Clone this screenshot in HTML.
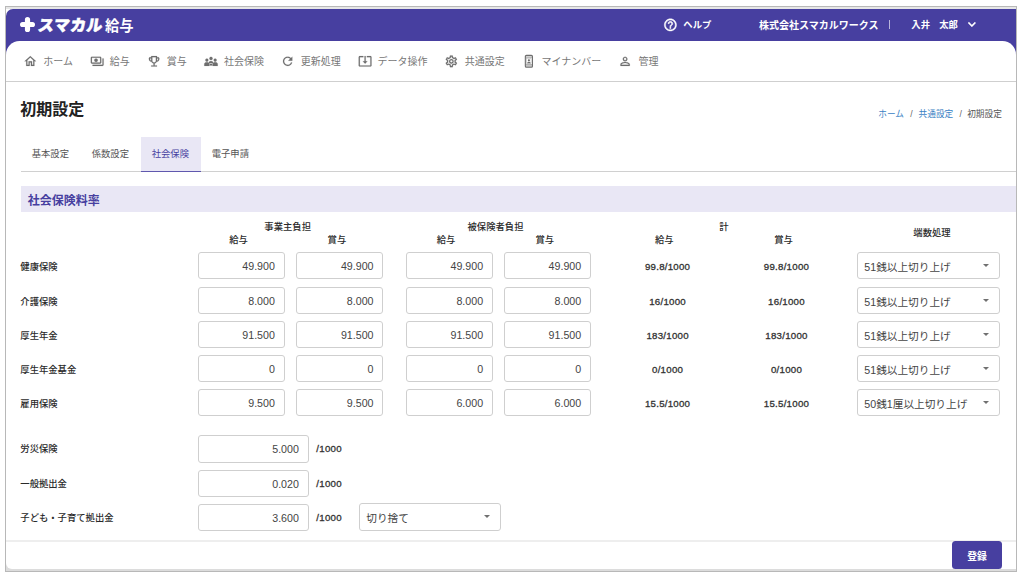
<!DOCTYPE html>
<html>
<head>
<meta charset="utf-8">
<title>初期設定</title>
<style>
*{box-sizing:border-box;margin:0;padding:0}
html,body{width:1024px;height:577px;overflow:hidden;background:#fff}
body{font-family:"Liberation Sans","Noto Sans CJK JP",sans-serif;color:#333;font-size:9.33px;position:relative}
a{color:inherit;text-decoration:none}
h1,h2{font-size:inherit;font-weight:inherit}
button{border:0;background:none;font:inherit;color:inherit;display:block}
.abs{position:absolute}
#frame{position:absolute;left:5px;top:6px;width:1012px;height:566px;border:1px solid #b8b8b8;background:#dcdcdc;overflow:hidden}
#panel{position:absolute;left:0;top:0;width:1010px;height:562px;background:#fff;border-radius:0 0 0 6px}
#topband{position:absolute;left:0;top:0;width:1010px;height:2px;background:#e6e6e6}
#header{position:absolute;left:0;top:2px;width:1010px;height:46px;background:#473fa0;border-radius:7px 0 0 0}
#nav{position:absolute;left:0;top:34px;width:1010px;height:41px;background:#fff;border-radius:13.5px 13.5px 0 0;border-bottom:1px solid #cfcfcf}
.t{position:absolute;white-space:nowrap;line-height:1;transform:translateY(-50%)}
.b{font-weight:bold}
.m{font-weight:500}
.w{color:#fff}
.navt{color:#777;font-size:10px}
.inp{position:absolute;height:27px;border:1px solid #cfcfcf;border-radius:3px;background:#fff;font-size:10.67px;color:#444}
.inp span{position:absolute;right:9px;top:calc(50% + 0.2px);transform:translateY(-50%);line-height:1;white-space:nowrap}
.sel span{left:6px;right:auto;top:calc(50% + 1px)}
.sel i{position:absolute;right:10px;top:11.2px;width:0;height:0;border-left:3.8px solid transparent;border-right:3.8px solid transparent;border-top:3.8px solid #707070}
.c{transform:translate(-50%,-50%)}
.r{transform:translate(-100%,-50%)}
.hd{font-weight:500;font-size:9.33px;color:#2a2a2a}
.n{letter-spacing:0.25px;font-weight:normal;font-size:9.7px;color:#333;-webkit-text-stroke:0.3px #333}
</style>
</head>
<body>
<div id="frame">
<div id="panel"></div>
<div id="topband"></div>
<div id="header"></div>
<div id="nav"></div>
</div>

<header>
<svg class="abs" style="left:20px;top:17.2px" width="15" height="15" viewBox="0 0 15 15"><path d="M4.900 2.600a2.600 2.600 0 0 1 5.200 0v2.300h2.300a2.600 2.600 0 0 1 0 5.200h-2.300v2.300a2.600 2.600 0 0 1-5.200 0v-2.300H2.600a2.600 2.600 0 0 1 0-5.200h2.300z" fill="#fff"/></svg>
<div class="t w" style="left:37.6px;top:25.8px;font-size:16px;font-weight:900;transform:translateY(-50%) skewX(-8deg);letter-spacing:0.3px;-webkit-text-stroke:0.5px #fff">スマカル</div>
<div class="t w b" style="left:105px;top:25.9px;font-size:14.3px">給与</div>
<svg class="abs" style="left:662px;top:16px" width="18" height="18" viewBox="0 0 18 18" color="#fff"><g transform="translate(1.10 1.60) scale(0.6083)" fill="currentColor" stroke="currentColor" stroke-width="0.7"><path d="M11 18h2v-2h-2v2zm1-16C6.480 2 2 6.480 2 12s4.480 10 10 10 10-4.480 10-10S17.520 2 12 2zm0 18c-4.410 0-8-3.590-8-8s3.590-8 8-8 8 3.590 8 8-3.590 8-8 8zm0-14c-2.210 0-4 1.790-4 4h2c0-1.100.9-2 2-2s2 .9 2 2c0 2-3 1.750-3 5h2c0-2.250 3-2.500 3-5 0-2.210-1.790-4-4-4z"/></g></svg>
<div class="t w b" style="left:683.3px;top:26px;font-size:9.33px">ヘルプ</div>
<div class="t w b" style="left:759px;top:26px;font-size:10px">株式会社スマカルワークス</div>
<div class="abs" style="left:889.3px;top:20.3px;width:1px;height:9px;background:#b9b5dc"></div>
<div class="t w b" style="left:911.3px;top:26px;font-size:9.33px">入井　太郎</div>
<svg class="abs" style="left:963px;top:15px" width="19" height="19" viewBox="0 0 19 19" color="#fff"><g transform="translate(1.15 1.55) scale(0.6458)" fill="currentColor" stroke="currentColor" stroke-width="0.5"><path d="M16.590 8.590L12 13.170 7.410 8.590 6 10l6 6 6-6z"/></g></svg>
</header>
<nav>
<svg class="abs" style="left:22px;top:53px" width="17" height="17" viewBox="0 0 17 17" color="#6e6e6e"><g transform="translate(1.30 1.30) scale(0.5833)" fill="currentColor" stroke="currentColor" stroke-width="0.25"><path d="M12 5.69l5 4.5V18h-2v-6H9v6H7v-7.81l5-4.5M12 3L2 12h3v8h6v-6h2v6h6v-8h3L12 3z"/></g></svg>
<a class="t navt" style="left:43.3px;top:62.4px;">ホーム</a>
<svg class="abs" style="left:89px;top:53px" width="17" height="17" viewBox="0 0 17 17" color="#6e6e6e"><g transform="translate(1.20 1.30) scale(0.5833)" fill="currentColor" stroke="currentColor" stroke-width="0.25"><path d="M19 14V6c0-1.1-.9-2-2-2H3c-1.1 0-2 .9-2 2v8c0 1.1.9 2 2 2h14c1.1 0 2-.9 2-2zm-2 0H3V6h14v8zm-7-7c-1.66 0-3 1.34-3 3s1.34 3 3 3 3-1.34 3-3-1.34-3-3-3zm13 0v11c0 1.1-.9 2-2 2H4v-2h17V7h2z"/></g></svg>
<a class="t navt" style="left:109.7px;top:62.4px;">給与</a>
<svg class="abs" style="left:146px;top:53px" width="17" height="17" viewBox="0 0 17 17" color="#6e6e6e"><g transform="translate(1.10 1.30) scale(0.5833)" fill="currentColor" stroke="currentColor" stroke-width="0.25"><path d="M19 5h-2V3H7v2H5c-1.1 0-2 .9-2 2v1c0 2.55 1.92 4.63 4.39 4.94.63 1.5 1.98 2.63 3.61 2.96V19H7v2h10v-2h-4v-3.1c1.63-.33 2.98-1.46 3.61-2.96C19.08 12.63 21 10.55 21 8V7c0-1.1-.9-2-2-2zM5 8V7h2v3.820C5.84 10.4 5 9.3 5 8zm7 6c-1.65 0-3-1.35-3-3V5h6v6c0 1.65-1.35 3-3 3zm7-6c0 1.3-.84 2.4-2 2.820V7h2v1z"/></g></svg>
<a class="t navt" style="left:166.7px;top:62.4px;">賞与</a>
<svg class="abs" style="left:203px;top:53px" width="17" height="17" viewBox="0 0 17 17" color="#6e6e6e"><g transform="translate(1.00 1.40) scale(0.5833)" fill="currentColor" stroke="currentColor" stroke-width="0.25"><circle cx="12" cy="6.900" r="2.700"/><circle cx="4.900" cy="9.800" r="2.600"/><circle cx="19.100" cy="9.800" r="2.600"/><path d="M8.200 15.200c0-2.600 1.500-4 3.800-4s3.800 1.400 3.800 4z"/><path d="M0.500 19.800v-3.300c0-2 1.800-3 4.400-3s4.400 1 4.400 3v3.300z"/><path d="M14.700 19.800v-3.300c0-2 1.800-3 4.400-3s4.400 1 4.400 3v3.300z"/><path d="M10 16.400h4v2.600h-4z"/></g></svg>
<a class="t navt" style="left:224px;top:62.4px;">社会保険</a>
<svg class="abs" style="left:279px;top:53px" width="17" height="17" viewBox="0 0 17 17" color="#6e6e6e"><g transform="translate(1.65 1.30) scale(0.5833)" fill="currentColor" stroke="currentColor" stroke-width="0.25"><path d="M17.65 6.35C16.2 4.9 14.21 4 12 4c-4.420 0-7.990 3.580-7.990 8s3.570 8 7.990 8c3.730 0 6.840-2.550 7.730-6h-2.080c-.820 2.330-3.040 4-5.650 4-3.310 0-6-2.690-6-6s2.690-6 6-6c1.660 0 3.140.69 4.220 1.780L13 11h7V4l-2.350 2.350z"/></g></svg>
<a class="t navt" style="left:300.8px;top:62.4px;">更新処理</a>
<svg class="abs" style="left:357px;top:53px" width="17" height="17" viewBox="0 0 17 17" color="#6e6e6e"><g transform="translate(1.10 1.05) scale(0.5833)" fill="currentColor" stroke="currentColor" stroke-width="0.25"><path d="M12 16.500l4-4h-3v-9h-2v9H8l4 4zm9-13h-6v1.990h6v14.030H3V5.490h6V3.500H3c-1.100 0-2 .9-2 2v14c0 1.100.9 2 2 2h18c1.100 0 2-.9 2-2v-14c0-1.100-.9-2-2-2z"/></g></svg>
<a class="t navt" style="left:377.5px;top:62.4px;">データ操作</a>
<svg class="abs" style="left:443px;top:53px" width="17" height="17" viewBox="0 0 17 17" color="#6e6e6e"><g transform="translate(1.35 1.30) scale(0.5833)" fill="currentColor" stroke="currentColor" stroke-width="0.25"><path fill-rule="evenodd" d="M19.430 12.980c.04-.32.07-.64.07-.98 0-.34-.03-.66-.07-.98l2.110-1.650c.19-.15.24-.42.12-.64l-2-3.460c-.09-.16-.26-.25-.44-.25-.06 0-.12.01-.17.03l-2.490 1c-.52-.4-1.080-.73-1.690-.98l-.38-2.650C14.460 2.180 14.250 2 14 2h-4c-.25 0-.46.18-.49.42l-.38 2.650c-.61.25-1.170.59-1.690.98l-2.490-1c-.06-.02-.12-.03-.18-.03-.17 0-.34.09-.43.25l-2 3.460c-.13.22-.07.49.12.64l2.110 1.650c-.04.32-.07.65-.07.98 0 .33.03.66.07.98l-2.110 1.650c-.19.15-.24.42-.12.64l2 3.460c.09.16.26.25.44.25.06 0 .12-.01.17-.03l2.490-1c.52.4 1.080.73 1.690.98l.38 2.650c.03.24.24.42.49.42h4c.25 0 .46-.18.49-.42l.38-2.650c.61-.25 1.170-.59 1.690-.98l2.490 1c.06.02.12.03.18.03.17 0 .34-.09.43-.25l2-3.460c.12-.22.07-.49-.12-.64l-2.110-1.650zm-1.980-1.710c.04.31.05.52.05.73 0 .21-.02.43-.05.73l-.14 1.130.89.7 1.080.84-.7 1.210-1.270-.51-1.040-.42-.9.68c-.43.32-.84.56-1.250.73l-1.060.43-.16 1.130-.2 1.350h-1.400l-.19-1.350-.16-1.130-1.060-.43c-.43-.18-.83-.41-1.230-.71l-.91-.7-1.060.43-1.270.51-.7-1.210 1.080-.84.89-.7-.14-1.130c-.03-.31-.05-.54-.05-.74s.02-.43.05-.73l.14-1.130-.89-.7-1.080-.84.7-1.210 1.270.51 1.040.42.9-.68c.43-.32.84-.56 1.250-.73l1.060-.43.16-1.130.2-1.350h1.390l.19 1.350.16 1.130 1.060.43c.43.18.83.41 1.230.71l.91.7 1.060-.43 1.270-.51.7 1.210-1.070.85-.89.7.14 1.130zM12 8c-2.210 0-4 1.790-4 4s1.790 4 4 4 4-1.790 4-4-1.790-4-4-4zm0 6c-1.100 0-2-.9-2-2s.9-2 2-2 2 .9 2 2-.9 2-2 2z"/></g></svg>
<a class="t navt" style="left:464.7px;top:62.4px;">共通設定</a>
<svg class="abs" style="left:520px;top:53px" width="17" height="17" viewBox="0 0 17 17" color="#6e6e6e"><g transform="translate(1.90 1.30) scale(0.5833)" fill="currentColor" stroke="currentColor" stroke-width="0.25"><rect x="5.900" y="1.900" width="12.200" height="20.200" rx="1.800" fill="none" stroke="currentColor" stroke-width="1.900"/><path d="M6 4.800h12M6 18h12" fill="none" stroke="currentColor" stroke-width="1.300"/><path d="M6 20.300h12" fill="none" stroke="currentColor" stroke-width="1.100"/><rect x="8.300" y="7" width="7.400" height="8.800" fill="none" stroke="currentColor" stroke-width="0.800" opacity="0.600"/><circle cx="12" cy="10.200" r="1.900" stroke="none"/><path d="M8.900 15.400c0-1.800 1.500-2.700 3.100-2.700s3.100.9 3.100 2.700z" stroke="none"/></g></svg>
<a class="t navt" style="left:541.4px;top:62.4px;">マイナンバー</a>
<svg class="abs" style="left:617px;top:53px" width="17" height="17" viewBox="0 0 17 17" color="#6e6e6e"><g transform="translate(1.10 1.30) scale(0.5833)" fill="currentColor" stroke="currentColor" stroke-width="0.25"><path fill-rule="evenodd" d="M12 5.900c1.160 0 2.100.94 2.100 2.100s-.94 2.100-2.100 2.100S9.900 9.160 9.900 8s.94-2.100 2.100-2.100m0 9c2.970 0 6.100 1.460 6.100 2.100v1.100H5.900V17c0-.64 3.130-2.100 6.100-2.100M12 4C9.790 4 8 5.790 8 8s1.790 4 4 4 4-1.790 4-4-1.790-4-4-4zm0 9c-2.670 0-8 1.340-8 4v3h16v-3c0-2.660-5.330-4-8-4z"/></g></svg>
<a class="t navt" style="left:638.5px;top:62.4px;">管理</a>
</nav>
<main>
<h1 class="t b" style="left:20.3px;top:109.9px;font-size:16px;color:#222">初期設定</h1>
<a class="t" style="left:878.3px;top:113.7px;font-size:8.67px;color:#3b82c4">ホーム</a>
<div class="t" style="left:910.2px;top:113.7px;font-size:8.67px;color:#666">/</div>
<a class="t" style="left:918.6px;top:113.7px;font-size:8.67px;color:#3b82c4">共通設定</a>
<div class="t" style="left:959.4px;top:113.7px;font-size:8.67px;color:#666">/</div>
<div class="t" style="left:967.2px;top:113.7px;font-size:8.67px;color:#555">初期設定</div>
<div class="abs" style="left:20.5px;top:171px;width:995.5px;height:1px;background:#d0d0d0"></div>
<div class="abs" style="left:140.5px;top:137px;width:60.5px;height:34px;background:#e9e7f5"></div>
<div class="abs" style="left:140.5px;top:170.5px;width:60.5px;height:1.3px;background:#6058ae"></div>
<a class="t" style="left:31.7px;top:155.1px;font-size:9.33px;color:#555">基本設定</a>
<a class="t" style="left:91.7px;top:155.1px;font-size:9.33px;color:#555">係数設定</a>
<a class="t" style="left:151.7px;top:155.1px;font-size:9.33px;color:#473fa0">社会保険</a>
<a class="t" style="left:211.7px;top:155.1px;font-size:9.33px;color:#555">電子申請</a>
<div class="abs" style="left:20.5px;top:186px;width:995.5px;height:25.6px;background:#e9e7f5"></div>
<h2 class="t b" style="left:27.7px;top:200.6px;font-size:12px;color:#473fa0">社会保険料率</h2>
<div class="t hd c" style="left:287.7px;top:227.8px;">事業主負担</div>
<div class="t hd c" style="left:495.5px;top:227.8px;">被保険者負担</div>
<div class="t hd c" style="left:724px;top:227.8px;">計</div>
<div class="t hd c" style="left:932px;top:234.2px;">端数処理</div>
<div class="t hd c" style="left:238.5px;top:241.3px;">給与</div>
<div class="t hd c" style="left:336.9px;top:241.3px;">賞与</div>
<div class="t hd c" style="left:446px;top:241.3px;">給与</div>
<div class="t hd c" style="left:544.8px;top:241.3px;">賞与</div>
<div class="t hd c" style="left:664.3px;top:241.3px;">給与</div>
<div class="t hd c" style="left:783.5px;top:241.3px;">賞与</div>
<div class="t hd" style="left:20.3px;top:267.8px;">健康保険</div>
<div class="inp" style="left:197.6px;top:252px;width:87.3px"><span>49.900</span></div>
<div class="inp" style="left:296.2px;top:252px;width:87.3px"><span>49.900</span></div>
<div class="inp" style="left:405.8px;top:252px;width:87.3px"><span>49.900</span></div>
<div class="inp" style="left:503.9px;top:252px;width:87.3px"><span>49.900</span></div>
<div class="t hd c n" style="left:667.6px;top:267.1px;">99.8/1000</div>
<div class="t hd c n" style="left:786.5px;top:267.1px;">99.8/1000</div>
<div class="inp sel" style="left:857.3px;top:252px;width:142.3px"><span>51銭以上切り上げ</span><i></i></div>
<div class="t hd" style="left:20.3px;top:302.8px;">介護保険</div>
<div class="inp" style="left:197.6px;top:287px;width:87.3px"><span>8.000</span></div>
<div class="inp" style="left:296.2px;top:287px;width:87.3px"><span>8.000</span></div>
<div class="inp" style="left:405.8px;top:287px;width:87.3px"><span>8.000</span></div>
<div class="inp" style="left:503.9px;top:287px;width:87.3px"><span>8.000</span></div>
<div class="t hd c n" style="left:667.6px;top:302.1px;">16/1000</div>
<div class="t hd c n" style="left:786.5px;top:302.1px;">16/1000</div>
<div class="inp sel" style="left:857.3px;top:287px;width:142.3px"><span>51銭以上切り上げ</span><i></i></div>
<div class="t hd" style="left:20.3px;top:336.8px;">厚生年金</div>
<div class="inp" style="left:197.6px;top:321px;width:87.3px"><span>91.500</span></div>
<div class="inp" style="left:296.2px;top:321px;width:87.3px"><span>91.500</span></div>
<div class="inp" style="left:405.8px;top:321px;width:87.3px"><span>91.500</span></div>
<div class="inp" style="left:503.9px;top:321px;width:87.3px"><span>91.500</span></div>
<div class="t hd c n" style="left:667.6px;top:336.1px;">183/1000</div>
<div class="t hd c n" style="left:786.5px;top:336.1px;">183/1000</div>
<div class="inp sel" style="left:857.3px;top:321px;width:142.3px"><span>51銭以上切り上げ</span><i></i></div>
<div class="t hd" style="left:20.3px;top:370.8px;">厚生年金基金</div>
<div class="inp" style="left:197.6px;top:355px;width:87.3px"><span>0</span></div>
<div class="inp" style="left:296.2px;top:355px;width:87.3px"><span>0</span></div>
<div class="inp" style="left:405.8px;top:355px;width:87.3px"><span>0</span></div>
<div class="inp" style="left:503.9px;top:355px;width:87.3px"><span>0</span></div>
<div class="t hd c n" style="left:667.6px;top:370.1px;">0/1000</div>
<div class="t hd c n" style="left:786.5px;top:370.1px;">0/1000</div>
<div class="inp sel" style="left:857.3px;top:355px;width:142.3px"><span>51銭以上切り上げ</span><i></i></div>
<div class="t hd" style="left:20.3px;top:404.8px;">雇用保険</div>
<div class="inp" style="left:197.6px;top:389px;width:87.3px"><span>9.500</span></div>
<div class="inp" style="left:296.2px;top:389px;width:87.3px"><span>9.500</span></div>
<div class="inp" style="left:405.8px;top:389px;width:87.3px"><span>6.000</span></div>
<div class="inp" style="left:503.9px;top:389px;width:87.3px"><span>6.000</span></div>
<div class="t hd c n" style="left:667.6px;top:404.1px;">15.5/1000</div>
<div class="t hd c n" style="left:786.5px;top:404.1px;">15.5/1000</div>
<div class="inp sel" style="left:857.3px;top:389px;width:142.3px"><span>50銭1厘以上切り上げ</span><i></i></div>
<div class="t hd" style="left:20.3px;top:450.4px;">労災保険</div>
<div class="inp" style="left:197.6px;top:435px;width:111.3px;height:28px"><span>5.000</span></div>
<div class="t hd n" style="left:316.3px;top:449.2px;">/1000</div>
<div class="t hd" style="left:20.3px;top:484.9px;">一般拠出金</div>
<div class="inp" style="left:197.6px;top:470px;width:111.3px;height:27px"><span>0.020</span></div>
<div class="t hd n" style="left:316.3px;top:483.7px;">/1000</div>
<div class="t hd" style="left:20.3px;top:518.9px;">子ども・子育て拠出金</div>
<div class="inp" style="left:197.6px;top:504px;width:111.3px;height:27px"><span>3.600</span></div>
<div class="t hd n" style="left:316.3px;top:517.7px;">/1000</div>
<div class="inp sel" style="left:359.3px;top:503px;width:141.8px;height:28px"><span>切り捨て</span><i></i></div>
<div class="abs" style="left:6px;top:540px;width:1010px;height:2px;background:#eeeeee"></div>
<div class="abs" style="left:952px;top:541px;width:50px;height:28px;background:#473fa0;border-radius:3.5px"></div>
<button class="t w b c" style="left:977px;top:556.7px;font-size:9.8px">登録</button>
</main>
</body>
</html>
